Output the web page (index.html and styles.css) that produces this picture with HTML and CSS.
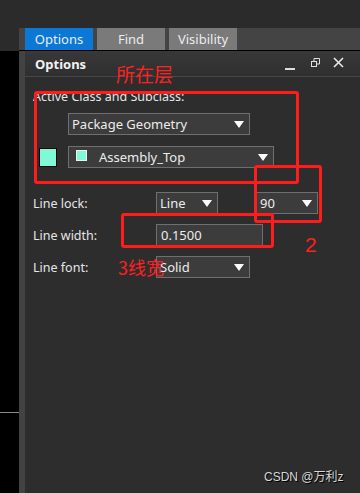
FILE: index.html
```html
<!DOCTYPE html>
<html lang="en">
<head>
    <meta charset="utf-8">
    <link rel="stylesheet" href="styles.css">
</head>
<body>
    <div class="screen">
        <div class="topbar"></div>
        <div class="tabrow">
            <div class="tabrow-gap"></div>
            <div class="tabs">
                <div class="tab tab--active">Options</div>
                <div class="tab">Find</div>
                <div class="tab">Visibility</div>
            </div>
        </div>
        <div class="workspace">
            <div class="canvas"><div class="canvas-line"></div></div>
            <div class="panel">
                <div class="panel-header">
                    <span class="panel-title">Options</span>
                    <div class="panel-controls">
                        <span class="ctl ctl-min"></span>
                        <svg class="ctl ctl-restore" width="9" height="9" viewBox="0 0 9 9">
                            <rect x="0.5" y="3.5" width="5" height="5" fill="none" stroke="#e0e0e0"/>
                            <path d="M3 3V0.5H8.5V6H6" fill="none" stroke="#e0e0e0"/>
                        </svg>
                        <svg class="ctl ctl-close" width="11" height="11" viewBox="0 0 11 11">
                            <path d="M1 1L10 10M10 1L1 10" stroke="#e8e8e8" stroke-width="1.6"/>
                        </svg>
                    </div>
                </div>
                <div class="panel-body">
                    <div class="section-label">Active Class and Subclass:</div>
                    <div class="class-row">
                        <div class="combo combo--class">Package Geometry<span class="arrow"></span></div>
                    </div>
                    <div class="subclass-row">
                        <span class="swatch"></span>
                        <div class="combo combo--subclass"><span class="mini-swatch"></span>Assembly_Top<span class="arrow"></span></div>
                    </div>
                    <div class="field-row field-row--lock">
                        <span class="field-label">Line lock:</span>
                        <div class="combo combo--lock">Line<span class="arrow"></span></div>
                        <div class="combo combo--angle">90<span class="arrow"></span></div>
                    </div>
                    <div class="field-row">
                        <span class="field-label">Line width:</span>
                        <div class="textbox">0.1500</div>
                    </div>
                    <div class="field-row">
                        <span class="field-label">Line font:</span>
                        <div class="combo combo--font">Solid<span class="arrow"></span></div>
                    </div>
                </div>
            </div>
        </div>

        <!-- red notes drawn over the screenshot -->
        <div class="note-box note-box--layer"></div>
        <div class="note-text note-text--layer">所在层</div>
        <div class="note-box note-box--angle"></div>
        <div class="note-text note-text--two">2</div>
        <div class="note-box note-box--width"></div>
        <div class="note-text note-text--width">3线宽</div>

        <div class="watermark">CSDN @万利z</div>
    </div>
</body>
</html>
```

FILE: styles.css
```css
/* base */
body {
    margin: 0;
    background-color: #2d2d2d;
    font-family: 'Noto Sans', 'Open Sans', sans-serif;
    color: #e6e6e6;
}

.screen {
    position: relative;
    width: 360px;
    height: 493px;
    overflow: hidden;
    background-color: #2d2d2d;
}

.topbar {
    height: 28px;
    background-color: #2b2b2b;
}

/* tab strip */
.tabrow {
    display: flex;
    height: 23px;
}

.tabrow-gap {
    width: 19px;
    background-color: #2b2b2b;
}

.tabs {
    flex: 1;
    display: flex;
    gap: 4px;
    padding-left: 6px;
    background-color: #444444;
    border-bottom: 1px solid #000000;
}

.tab {
    width: 68px;
    height: 22px;
    line-height: 23px;
    text-align: center;
    font-size: 13px;
    color: #ececec;
    background-color: #7a7a7a;
}

.tab--active {
    background-color: #0a78d4;
}

/* workspace */
.workspace {
    display: flex;
    height: 442px;
}

.canvas {
    width: 19px;
    background-color: #000000;
}

.canvas-line {
    height: 1px;
    margin-top: 361px;
    background-color: #8a8a8a;
}

.panel {
    flex: 1;
    border-left: 6px solid #434343;
    background-color: #2d2d2d;
}

.panel-header {
    display: flex;
    align-items: center;
    justify-content: space-between;
    height: 25px;
    padding-left: 10px;
    background: linear-gradient(#383838, #2f2f2f);
    border-bottom: 1px solid #474747;
}

.panel-title {
    font-size: 13px;
    font-weight: bold;
    color: #f2f2f2;
}

.panel-controls {
    display: flex;
    align-items: center;
    padding-right: 16px;
}

.ctl-min {
    width: 10px;
    height: 2px;
    margin-top: 10px;
    background-color: #dcdcdc;
}

.ctl-restore {
    margin-left: 16px;
    margin-top: -2px;
}

.ctl-close {
    margin-left: 13px;
    margin-top: -2px;
}

/* body */
.panel-body {
    padding: 13px 0 0 8px;
    font-size: 12.5px;
}

.section-label {
    line-height: 14px;
}

.class-row {
    padding: 9px 0 0 35px;
}

.subclass-row {
    display: flex;
    align-items: center;
    padding-top: 11px;
}

.swatch {
    width: 16px;
    height: 17px;
    margin-left: 6px;
    margin-right: 11px;
    background-color: #7ff9d6;
    border: 1px solid #0a0a0a;
}

.combo,
.textbox {
    position: relative;
    box-sizing: border-box;
    height: 22px;
    line-height: 20px;
    padding-left: 3px;
    font-size: 13px;
    color: #ececec;
    background-color: #3c3c3c;
    border: 1px solid #6f6f6f;
}

.arrow {
    position: absolute;
    right: 5px;
    top: 7px;
    width: 0;
    height: 0;
    border-left: 5px solid transparent;
    border-right: 5px solid transparent;
    border-top: 7px solid #ffffff;
}

.combo--class {
    width: 182px;
}

.combo--subclass {
    display: flex;
    align-items: center;
    width: 206px;
    padding-left: 7px;
}

.mini-swatch {
    width: 9px;
    height: 9px;
    margin-right: 12px;
    margin-top: -3px;
    background-color: #7ff9d6;
    border: 1px solid #f0f0f0;
}

.field-row {
    display: flex;
    align-items: center;
    padding-top: 10px;
}

.field-row--lock {
    padding-top: 24px;
}

.field-label {
    width: 123px;
}

.combo--lock {
    width: 62px;
}

.combo--angle {
    width: 62px;
    margin-left: 38px;
}

.textbox {
    width: 107px;
    padding-left: 4px;
}

.combo--font {
    width: 94px;
}

/* red annotations */
.note-box {
    position: absolute;
    border: 3px solid #ff1c1c;
    border-radius: 3px;
}

.note-box--layer {
    left: 34px;
    top: 91px;
    width: 259px;
    height: 87px;
}

.note-box--angle {
    left: 254px;
    top: 165px;
    width: 62px;
    height: 52px;
}

.note-box--width {
    left: 121px;
    top: 213px;
    width: 147px;
    height: 29px;
}

.note-text {
    position: absolute;
    color: #ff2020;
    font-family: 'Noto Sans CJK SC', sans-serif;
    font-size: 19px;
    line-height: 22px;
}

.note-text--layer {
    left: 116px;
    top: 63px;
}

.note-text--two {
    left: 305px;
    top: 234px;
    font-family: 'Liberation Sans', sans-serif;
    font-size: 21px;
}

.note-text--width {
    left: 118px;
    top: 256px;
    font-size: 18px;
}

.watermark {
    position: absolute;
    left: 264px;
    top: 467px;
    font-family: 'Liberation Sans', 'Noto Sans CJK SC', sans-serif;
    font-size: 12px;
    color: #d8d8d8;
    text-shadow: 1px 1px 0 #000000;
}
```
